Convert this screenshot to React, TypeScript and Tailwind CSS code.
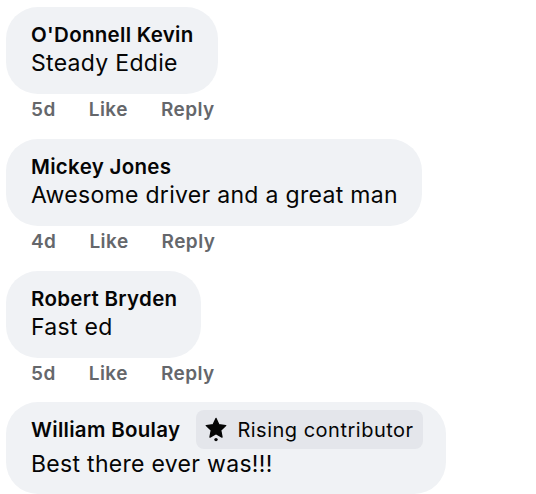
import React from 'react';

interface Comment {
  name: string;
  text: string;
  age: string;
  badge?: string;
}

const comments: Comment[] = [
  { name: "O'Donnell Kevin", text: 'Steady Eddie', age: '5d' },
  { name: 'Mickey Jones', text: 'Awesome driver and a great man', age: '4d' },
  { name: 'Robert Bryden', text: 'Fast ed', age: '5d' },
  { name: 'William Boulay', text: 'Best there ever was!!!', age: '', badge: 'Rising contributor' },
];

function RisingStar() {
  return (
    <svg width="24" height="26" viewBox="0 0 24 26" className="shrink-0">
      <path
        d="M12 1.5l2.9 6.3 6.8.8-5 4.7 1.3 6.8L12 16.7l-6 3.4 1.3-6.8-5-4.7 6.8-.8z"
        fill="#050505"
        strokeLinejoin="round"
        stroke="#050505"
        strokeWidth="1.4"
      />
      <circle cx="12" cy="22.6" r="1.7" fill="#050505" />
    </svg>
  );
}

export default function App() {
  return (
    <div
      className="w-[536px] h-[494px] bg-white overflow-hidden pl-[6px] pt-[7px] text-[#050505]"
      style={{ fontFamily: 'Inter, "Liberation Sans", sans-serif' }}
    >
      {comments.map((c, i) => (
        <div key={i} className="flex flex-col items-start">
          {c.badge ? (
            <div className="bg-[#f0f2f5] rounded-[32px] pl-[25px] pr-[23px] pt-[8px] pb-[15px] mt-[-1px]">
              <div className="flex items-center gap-4">
                <span className="text-[20.5px] leading-[26px] font-semibold tracking-[0.3px]">{c.name}</span>
                <span className="flex items-center gap-[9px] bg-[#e4e6eb] rounded-[8px] h-[39px] pl-[8px] pr-[9px] text-[20px] tracking-[0.5px]">
                  <RisingStar />
                  {c.badge}
                </span>
              </div>
              <div className="text-[23px] leading-[30px] tracking-[0.3px]">{c.text}</div>
            </div>
          ) : (
            <>
              <div className="bg-[#f0f2f5] rounded-[32px] pl-[25px] pr-[24px] pt-[15px] pb-[16px]">
                <div className="text-[20.5px] leading-[26px] font-semibold tracking-[0.3px]">{c.name}</div>
                <div className="text-[23px] leading-[30px] tracking-[0.3px]">{c.text}</div>
              </div>
              <div className="flex items-center gap-[33px] pl-[25px] mt-[3px] mb-[16px] text-[19px] leading-[26px] font-semibold tracking-[0.45px] text-[#65676b]">
                <span>{c.age}</span>
                <span>Like</span>
                <span>Reply</span>
              </div>
            </>
          )}
        </div>
      ))}
    </div>
  );
}
